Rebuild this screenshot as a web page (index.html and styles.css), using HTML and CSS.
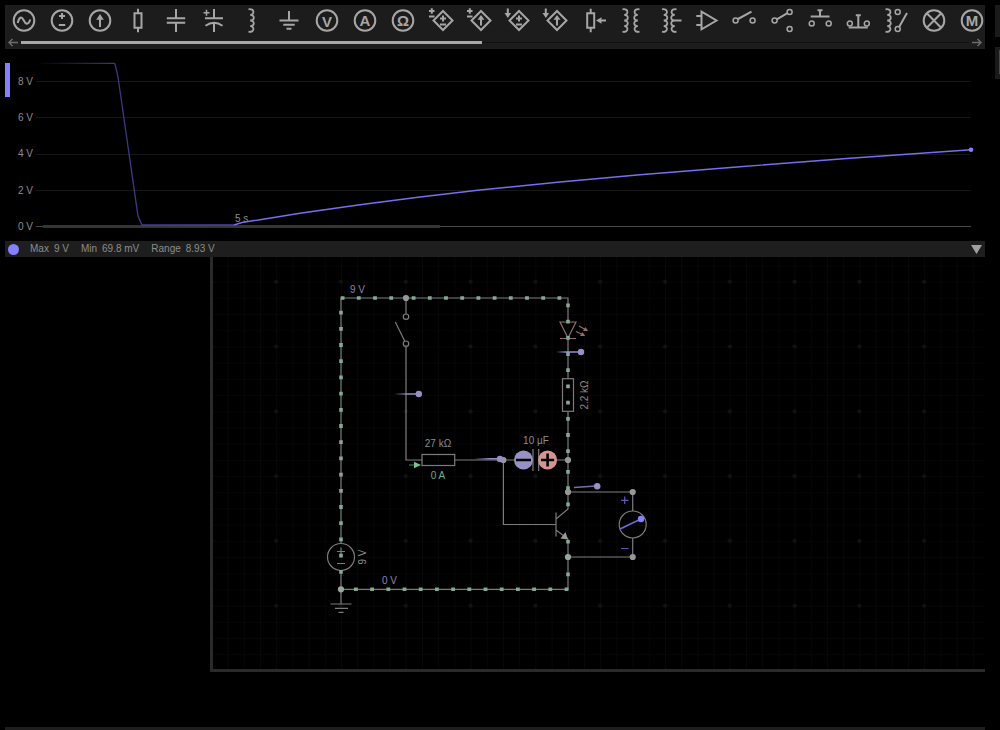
FILE: index.html
```html
<!DOCTYPE html>
<html lang="en">
<head>
<meta charset="utf-8">
<title>Circuit simulator</title>
<link rel="stylesheet" href="styles.css">
</head>
<body>
<div class="app">
<main class="workspace">
  <nav class="toolbar" aria-label="Components">
    <div class="tools">
      <button class="tool" aria-label="AC source"><svg viewBox="-18 -15.5 36 31"><circle r="10.3"/><path d="M-6.3 2.5C-5-3.5-2.500-4.500-.5-.5S4 5.500 6.300-1"/></svg></button>
      <button class="tool" aria-label="Voltage source"><svg viewBox="-18 -15.5 36 31"><circle r="10.3"/><path d="M-3-4.500H3M0-7.500V-1.500M-3.200 4.500H3.200"/></svg></button>
      <button class="tool" aria-label="Current source"><svg viewBox="-18 -15.5 36 31"><circle r="10.3"/><path d="M0 6.500V-3"/><path class="solid" d="M0-6.500L3.800-.8H-3.800Z"/></svg></button>
      <button class="tool" aria-label="Resistor"><svg viewBox="-18 -15.5 36 31"><path d="M-3.500-7.300H3.500V7.300H-3.500ZM0-11.700V-7.300M0 7.300V11.700"/></svg></button>
      <button class="tool" aria-label="Capacitor"><svg viewBox="-18 -15.5 36 31"><path d="M-9.200-2.300H9.200M-9.200 2.200H9.200M0-11.500V-2.300M0 2.200V11.500"/></svg></button>
      <button class="tool" aria-label="Polarized capacitor"><svg viewBox="-18 -15.5 36 31"><path d="M-9-2.300H9M-8.500 5.200Q0-.8 8.500 5.200M0-11.500V-2.300M0 2.200V11.500"/><path class="thin" d="M-10.500-7.700H-4.500M-7.500-10.700V-4.700"/></svg></button>
      <button class="tool" aria-label="Inductor"><svg viewBox="-18 -15.5 36 31"><path id="coil" class="coil" d="M-2.500-11.200C3.500-12.500 4-5.600-.8-5.600C4-5.600 4 0-.8 0C4 0 4 5.600-.8 5.600C4 5.600 3.500 12.500-2.500 11.200"/></svg></button>
      <button class="tool" aria-label="Ground"><svg viewBox="-18 -15.5 36 31"><path d="M0-9.500V0M-9.500 0H9.500M-5.700 4.300H5.700M-2.500 8.300H2.500"/></svg></button>
      <button class="tool" aria-label="Voltmeter"><svg viewBox="-18 -15.5 36 31"><circle r="10.3"/><text class="glyph" y="6">V</text></svg></button>
      <button class="tool" aria-label="Ammeter"><svg viewBox="-18 -15.5 36 31"><circle r="10.3"/><text class="glyph" y="5">A</text></svg></button>
      <button class="tool" aria-label="Ohmmeter"><svg viewBox="-18 -15.5 36 31"><circle r="10.3"/><text class="glyph" y="5">Ω</text></svg></button>
      <button class="tool" aria-label="Voltage controlled voltage source"><svg viewBox="-18 -15.5 36 31"><path d="M2-9.500L11.500 0 2 9.500-7.500 0ZM-1-2H5M2-5V1M-1 4H5"/><path d="M-12-9.500H-6.500M-9.200-12.300V-6.700M-12-4H-6.500"/></svg></button>
      <button class="tool" aria-label="Voltage controlled current source"><svg viewBox="-18 -15.5 36 31"><path d="M2-9.500L11.500 0 2 9.500-7.500 0ZM2 5V-2"/><path class="solid" d="M2-5.500L5.500-.8H-1.500Z"/><path d="M-12-9.500H-6.500M-9.200-12.300V-6.700M-12-4H-6.500"/></svg></button>
      <button class="tool" aria-label="Current controlled voltage source"><svg viewBox="-18 -15.5 36 31"><path d="M2-9.500L11.500 0 2 9.500-7.500 0ZM-1-2H5M2-5V1M-1 4H5M-9.200-12V-6"/><path class="solid" d="M-9.200-2.500L-12.500-7.500H-5.900Z"/></svg></button>
      <button class="tool" aria-label="Current controlled current source"><svg viewBox="-18 -15.5 36 31"><path d="M2-9.500L11.500 0 2 9.500-7.500 0ZM2 5V-2M-9.200-12V-6"/><path class="solid" d="M2-5.500L5.500-.8H-1.500ZM-9.200-2.500L-12.500-7.500H-5.900Z"/></svg></button>
      <button class="tool" aria-label="Potentiometer"><svg viewBox="-18 -15.5 36 31"><path d="M-5.800-7.300H1.200V7.300H-5.800ZM-2.300-11.700V-7.300M-2.300 7.300V11.700M13 0H7"/><path class="solid" d="M3 0L8.500-3.300V3.300Z"/></svg></button>
      <button class="tool" aria-label="Transformer"><svg viewBox="-18 -15.5 36 31"><use href="#coil" x="-6"/><use href="#coil" transform="translate(6) scale(-1 1)"/></svg></button>
      <button class="tool" aria-label="Tapped transformer"><svg viewBox="-18 -15.5 36 31"><use href="#coil" x="-4.500"/><use href="#coil" transform="translate(5) scale(-1 1)"/><path d="M5.500 0H12.500"/></svg></button>
      <button class="tool" aria-label="Op-amp"><svg viewBox="-18 -15.5 36 31"><path d="M-5.500-8.800L9.500 0-5.500 8.800ZM-10.700-4.500H-5.500M-10.700 4.500H-5.500"/></svg></button>
      <button class="tool" aria-label="Switch"><svg viewBox="-18 -15.5 36 31"><g class="thin"><circle cx="-8.400" r="2.500"/><circle cx="8.600" r="2.500"/></g><path d="M-6-1.500L7.500-8.800"/></svg></button>
      <button class="tool" aria-label="Changeover switch"><svg viewBox="-18 -15.5 36 31"><g class="thin"><circle cx="-7.400" r="2.500"/><circle cx="7.600" cy="-8.500" r="2.500"/><circle cx="7.600" cy="8.500" r="2.500"/></g><path d="M-5.200-1.200L5.400-7.300"/></svg></button>
      <button class="tool" aria-label="Push button, normally open"><svg viewBox="-18 -15.5 36 31"><g class="thin"><circle cx="-8.300" cy="3" r="2.500"/><circle cx="8.700" cy="3" r="2.500"/></g><path d="M-9.300-4H9.500M0-10V-4M-2.500-10.300H2.500"/></svg></button>
      <button class="tool" aria-label="Push button, normally closed"><svg viewBox="-18 -15.5 36 31"><g class="thin"><circle cx="-8.200" cy="3" r="2.500"/><circle cx="8.800" cy="3" r="2.500"/></g><path d="M-9.300 7H9.800M.3-5V7M-2.200-5.300H2.800"/></svg></button>
      <button class="tool" aria-label="Relay"><svg viewBox="-18 -15.5 36 31"><use href="#coil" x="-8"/><g class="thin"><circle cx="1.700" cy="-8.500" r="2.500"/><circle cx="1.700" cy="8.500" r="2.500"/></g><path d="M3.100 6.500L11-7.500"/></svg></button>
      <button class="tool" aria-label="Lamp"><svg viewBox="-18 -15.5 36 31"><circle r="10.3"/><path d="M-7.200-7.200L7.200 7.200M7.200-7.200L-7.200 7.200"/></svg></button>
      <button class="tool" aria-label="Motor"><svg viewBox="-18 -15.5 36 31"><circle r="10.3"/><text class="glyph" y="5">M</text></svg></button>
    </div>
    <div class="scroller">
      <button class="scroll-arrow" aria-label="Scroll left"><svg viewBox="0 0 10 9"><path d="M10 4.500H1M4.500 1L1 4.500 4.500 8"/></svg></button>
      <div class="track"><div class="thumb"></div></div>
      <button class="scroll-arrow" aria-label="Scroll right"><svg viewBox="0 0 10 9"><path d="M0 4.500H9M5.500 1L9 4.500 5.500 8"/></svg></button>
    </div>
  </nav>

  <svg class="chart" viewBox="5 49 980 192" role="img" aria-label="Voltage over time">
    <defs>
      <linearGradient id="history" gradientUnits="userSpaceOnUse" x1="36" y1="0" x2="236" y2="0">
        <stop offset="0" stop-color="#4a45a0" stop-opacity="0"/>
        <stop offset=".4" stop-color="#4a45a0" stop-opacity=".8"/>
        <stop offset="1" stop-color="#4a45a0"/>
      </linearGradient>
    </defs>
    <rect class="channel" x="5" y="63" width="5" height="34"/>
    <path class="rule" d="M36 81.500H971M36 117.500H971M36 154.500H971M36 190.500H971"/>
    <path class="axis" d="M36 226.500H971"/>
    <rect class="window" x="43" y="225" width="397" height="3"/>
    <g class="label">
      <text x="18" y="85">8 V</text>
      <text x="18" y="121">6 V</text>
      <text x="18" y="157">4 V</text>
      <text x="18" y="194">2 V</text>
      <text x="18" y="230">0 V</text>
      <text x="235" y="222">5 s</text>
    </g>
    <path class="trace-old" d="M38 63.400L114 63.300 115 64 118 77 138 216 142 225H234"/>
    <path class="trace" d="M234 225L242 222.500 260 219.700 300 213.300 360 204.800 420 197 480 190 560 182 640 174.700 740 166.700 850 158.300 971 149.700"/>
    <circle class="trace-end" cx="971" cy="149.700" r="2.300"/>
  </svg>

  <section class="stats">
    <span class="dot"></span>
    <dl class="readings">
      <div class="reading"><dt>Max</dt><dd>9 V</dd></div>
      <div class="reading"><dt>Min</dt><dd>69.8 mV</dd></div>
      <div class="reading"><dt>Range</dt><dd>8.93 V</dd></div>
    </dl>
    <button class="collapse" aria-label="Collapse graph"><svg viewBox="0 0 11 9"><path d="M0 0H11L5.500 9Z"/></svg></button>
  </section>

  <section class="board">
    <svg class="circuit" viewBox="213 257 772 412" role="img" aria-label="Circuit diagram">
      <defs>
        <pattern id="cells" patternUnits="userSpaceOnUse" x="276.200" y="281.700" width="16.200" height="16.200"><path class="cell" d="M0 0H16.200M0 0V16.200"/></pattern>
        <pattern id="marks" patternUnits="userSpaceOnUse" x="243.800" y="249.300" width="64.800" height="64.800"><circle class="mark" cx="32.400" cy="32.400" r="2"/></pattern>
        <linearGradient id="p1" gradientUnits="userSpaceOnUse" x1="394" x2="408" y1="0" y2="0"><stop offset="0" stop-color="#9690c8" stop-opacity="0"/><stop offset="1" stop-color="#9690c8"/></linearGradient>
        <linearGradient id="p2" gradientUnits="userSpaceOnUse" x1="474" x2="490" y1="0" y2="0"><stop offset="0" stop-color="#9690c8" stop-opacity="0"/><stop offset="1" stop-color="#9690c8"/></linearGradient>
        <linearGradient id="p3" gradientUnits="userSpaceOnUse" x1="556" x2="566" y1="0" y2="0"><stop offset="0" stop-color="#9690c8" stop-opacity="0"/><stop offset="1" stop-color="#9690c8"/></linearGradient>
      </defs>
      <rect x="213" y="257" width="772" height="412" fill="url(#cells)"/>
      <rect x="213" y="257" width="772" height="412" fill="url(#marks)"/>

      <g class="wire">
        <path d="M341 543V298H568V322M568 338V378.700M568 411.300V509M568 539V589.300H341V570.500M341 589.300V604"/>
        <path d="M330.500 604H351.500M335 608.300H348M338.500 612.300H343.500"/>
        <circle cx="341" cy="557" r="13.500"/>
        <path d="M337 551.500H345M341 547.500V555.500M337 563.500H345"/>
        <path d="M406 298V314M404.800 341.200L395.300 322M406 346.500V460H422M454.700 460H533M538.700 460H568M503.400 460V524.500H556"/>
        <circle cx="406" cy="316.700" r="2.700"/><circle cx="406" cy="343.700" r="2.700"/>
        <rect x="422" y="454.500" width="32.700" height="11"/>
        <rect x="562.500" y="378.700" width="11" height="32.600"/>
        <path d="M533 449V471M538.700 449V471"/>
        <path d="M556 512.500V536.500M556 519L568 509M556 530L568 539"/>
        <path d="M568 492H632.700V511M632.700 538V557H568"/>
        <circle cx="632.700" cy="524.500" r="13.500"/>
      </g>
      <path class="led" d="M560 322H576L568 338ZM560 338.500H576M579 326L587 330.500M576 331.500L584.500 335.500"/>
      <path class="led-tip" d="M588 331L583 331 585.500 327ZM585 336L580 336 582.500 332Z"/>
      <path class="emitter" d="M568 539.500L560.500 538.500 565.500 532Z"/>

      <g class="current">
        <path d="M341 310.700V574"/>
        <path d="M340.700 298H394M411.700 298H562"/>
        <path d="M568 303.500V454M568 470V507M568 540V543.500M568 572.500V577"/>
        <path d="M354 589.300H569"/>
      </g>

      <g class="node">
        <circle cx="406" cy="298" r="3.100"/><circle cx="503.400" cy="460" r="3.100"/><circle cx="568" cy="460" r="3.100"/><circle cx="568" cy="492" r="3.100"/>
        <circle cx="632.700" cy="492" r="3.100"/><circle cx="632.700" cy="557" r="3.100"/>
      </g>
      <g class="node-live"><circle cx="341" cy="589.300" r="3.100"/><circle cx="568" cy="557" r="3.100"/></g>

      <path class="probe-line" stroke="url(#p1)" d="M394 394L418 394.010"/>
      <path class="probe-line" stroke="url(#p2)" d="M474 458.800L500 458.810"/>
      <path class="probe-line" stroke="url(#p3)" d="M556 352L580 352.010"/>
      <path class="probe-line" stroke="#746fae" d="M574 487.500L596 486"/>
      <g class="probe"><circle cx="418.800" cy="394" r="3.200"/><circle cx="500" cy="459" r="3.200"/><circle cx="581" cy="352" r="3.200"/><circle cx="597.200" cy="486.200" r="3.200"/></g>

      <circle class="pole-minus" cx="523.500" cy="460" r="9.500"/>
      <circle class="pole-plus" cx="547.600" cy="460" r="9.500"/>
      <path class="pole-sign" d="M516 460H531M541 460H554.200M547.600 453.400V466.600"/>

      <path class="meter" d="M621 500.300H628.500M624.700 496.500V504M621 548.500H628.500"/>
      <path class="needle" d="M620 529L641 519"/>
      <circle class="needle-tip" cx="641" cy="519" r="3.200"/>

      <path class="flow-line" d="M409 465H415"/>
      <path class="flow" d="M414 461.800L421 465 414 468.200Z"/>

      <g class="label">
        <text class="volt" x="350" y="293">9 V</text>
        <text class="volt" x="382" y="584">0 V</text>
        <text class="mid" x="438" y="447">27 kΩ</text>
        <text class="mid amp" x="438" y="479">0 A</text>
        <text class="mid" x="536" y="444">10 µF</text>
        <text class="mid" transform="translate(588 395) rotate(-90)">2.2 kΩ</text>
        <text class="mid" transform="translate(366 557) rotate(-90)">9 V</text>
      </g>
    </svg>
  </section>
  <footer class="drawer"></footer>
</main>
<aside class="side">
  <div class="side-panel"></div>
  <div class="side-panel"><div class="side-field"></div></div>
</aside>
</div>
</body>
</html>
```

FILE: styles.css
```css
* { box-sizing: border-box; }

body {
  margin: 0;
  background: #000;
  color: #8c8c8c;
  font: 10px/16px "Liberation Sans", Arial, sans-serif;
}

button {
  display: block;
  padding: 0;
  border: 0;
  background: none;
}

svg { display: block; }

.app {
  display: grid;
  grid-template-columns: minmax(0, 1fr) 5px;
  gap: 10px;
  min-height: 100vh;
  padding: 5px 0 0 5px;
}

.workspace {
  display: flex;
  flex-direction: column;
}

.toolbar {
  background: #1c1c1c;
  overflow: hidden;
}

.tools {
  display: flex;
  margin-right: -6px;
}

.tool {
  flex: 1;
  min-width: 0;
}

.tool svg {
  width: 36px;
  height: 31px;
  margin: 0 auto;
  fill: none;
  stroke: #a6a6a6;
  stroke-width: 2;
}

.tool .thin { stroke-width: 1.5; }
.tool .coil { stroke-width: 1.8; }
.tool .solid { fill: #a6a6a6; stroke: none; }

.tool .glyph {
  fill: #a6a6a6;
  stroke: none;
  font-size: 15px;
  font-weight: bold;
  text-anchor: middle;
}

.scroller {
  display: flex;
  align-items: center;
  gap: 3px;
  height: 13px;
  padding: 0 3px;
}

.scroll-arrow svg {
  width: 10px;
  height: 9px;
  fill: none;
  stroke: #6c6c6c;
  stroke-width: 1.5;
}

.track {
  flex: 1;
  background: linear-gradient(#101010, #101010) center / 100% 1px no-repeat;
}

.thumb {
  width: 48.6%;
  height: 3px;
  background: #a8a8a8;
}

.chart { width: 100%; }
.channel { fill: #8480ff; }
.rule { stroke: #161616; }
.axis { stroke: #484848; }
.window { fill: #353535; }
.label { fill: #8c8c8c; }
.trace-old { fill: none; stroke: url(#history); stroke-width: 1.3; }
.trace { fill: none; stroke: #756ff0; stroke-width: 1.4; }
.trace-end { fill: #8480ff; }

.stats {
  display: flex;
  align-items: center;
  height: 16px;
  padding: 0 3px;
  background: #1e1e1e;
}

.dot {
  width: 11px;
  height: 11px;
  border-radius: 50%;
  background: #8480ff;
}

.readings {
  display: flex;
  flex: 1;
  gap: 12px;
  margin: 0 0 0 11px;
}

.reading {
  display: flex;
  gap: 5px;
}

.reading dd { margin: 0; }

.collapse svg {
  width: 11px;
  height: 9px;
  fill: #a0a0a0;
}

.board {
  margin-left: 205px;
  border: solid #2a2a2a;
  border-width: 0 0 3px 3px;
}

.circuit { width: 100%; }
.cell { fill: none; stroke: #0c0c0c; }
.mark { fill: #131313; }
.wire { fill: none; stroke: #7c7c7c; stroke-width: 1.2; }
.led { fill: none; stroke: #946c6c; stroke-width: 1.2; }
.led-tip { fill: #946c6c; }
.emitter { fill: #999; }
.current { fill: none; stroke: #84aa92; stroke-width: 3.6; stroke-dasharray: 3.8 12.4; }
.node { fill: #989898; }
.node-live { fill: #94aa9c; }
.probe-line { fill: none; stroke-width: 1.4; }
.probe { fill: #9690c4; }
.pole-minus { fill: #9692c6; }
.pole-plus { fill: #d49494; }
.pole-sign { stroke: #000; stroke-width: 2.6; }
.meter { stroke: #5f59bb; stroke-width: 1.2; }
.needle { stroke: #706ad8; stroke-width: 1.5; }
.needle-tip { fill: #8480ff; }
.flow { fill: #7cc094; }
.flow-line { stroke: #568264; }
.mid { text-anchor: middle; }
.volt { fill: #8a84b4; }
.amp { fill: #74ac86; }

.drawer {
  flex: 1;
  min-height: 3px;
  margin-top: 55px;
  background: #1e1e1e;
}

.side {
  display: flex;
  flex-direction: column;
  gap: 10px;
  overflow: hidden;
}

.side-panel {
  height: 32px;
  padding: 3px 0 4px 4px;
  background: #1a1a1a;
}

.side-field {
  height: 24px;
  background: #484848;
}
```
